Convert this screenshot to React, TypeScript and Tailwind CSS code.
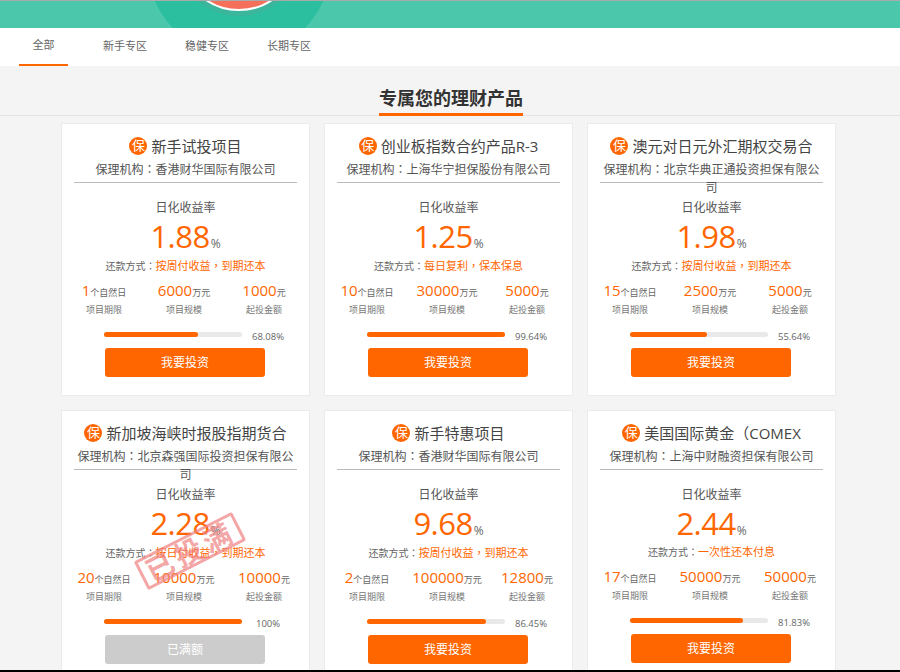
const font = { fontFamily: '"Open Sans", "Noto Sans CJK SC", sans-serif' };

type Product = {
  title: string;
  org: string;
  rate: string;
  repay: string;
  days: string;
  scale: string;
  min: string;
  progress: number;
  percent: string;
  full?: boolean;
};

const products: Product[] = [
  { title: "新手试投项目", org: "保理机构：香港财华国际有限公司", rate: "1.88", repay: "按周付收益，到期还本", days: "1", scale: "6000", min: "1000", progress: 68.08, percent: "68.08%" },
  { title: "创业板指数合约产品R-3", org: "保理机构：上海华宁担保股份有限公司", rate: "1.25", repay: "每日复利，保本保息", days: "10", scale: "30000", min: "5000", progress: 99.64, percent: "99.64%" },
  { title: "澳元对日元外汇期权交易合", org: "保理机构：北京华典正通投资担保有限公司", rate: "1.98", repay: "按周付收益，到期还本", days: "15", scale: "2500", min: "5000", progress: 55.64, percent: "55.64%" },
  { title: "新加坡海峡时报股指期货合", org: "保理机构：北京森强国际投资担保有限公司", rate: "2.28", repay: "按日付收益，到期还本", days: "20", scale: "10000", min: "10000", progress: 100, percent: "100%", full: true },
  { title: "新手特惠项目", org: "保理机构：香港财华国际有限公司", rate: "9.68", repay: "按周付收益，到期还本", days: "2", scale: "100000", min: "12800", progress: 86.45, percent: "86.45%" },
  { title: "美国国际黄金（COMEX", org: "保理机构：上海中财融资担保有限公司", rate: "2.44", repay: "一次性还本付息", days: "17", scale: "50000", min: "50000", progress: 81.83, percent: "81.83%" },
];

const tabs = ["全部", "新手专区", "稳健专区", "长期专区"];

// the reference centres full-width punctuation, which is the TC form of the glyph
function Cjk({ text }: { text: string }) {
  return (
    <>
      {text.split(/([：，（])/).map((part, i) =>
        i % 2 === 1 ? (
          <span key={i} className="font-['Noto_Sans_CJK_TC']">{part}</span>
        ) : (
          part
        ),
      )}
    </>
  );
}

function Stat({ value, unit, label }: { value: string; unit: string; label: string }) {
  return (
    <div className="text-center whitespace-nowrap">
      <div className="h-[20px] leading-[20px]">
        <span className="text-[15px] text-[#ff6600]">{value}</span>
        <span className="text-[9px] text-[#666]">{unit}</span>
      </div>
      <div className="mt-[3px] text-[9px] leading-[14px] text-[#777]">{label}</div>
    </div>
  );
}

function Card({ p }: { p: Product }) {
  return (
    <div className="relative h-[273px] w-[249px] shrink-0 border border-[#ebebeb] bg-white">
      <div className="mt-[11px] flex h-[22px] items-center justify-center gap-[4px] overflow-hidden whitespace-nowrap">
        <span className="flex h-[18px] w-[18px] shrink-0 items-center justify-center rounded-full bg-[#ff6600] text-[13px] text-white">保</span>
        <span className="text-[15px] text-[#444]"><Cjk text={p.title} /></span>
      </div>
      <div className="mx-[12px] mt-[3px] h-[23px] border-b border-[#bbb] text-center text-[12px] leading-[18px] text-[#555]">
        <Cjk text={p.org} />
      </div>
      <div className="mt-[15px] text-center text-[12px] leading-[20px] text-[#555]">日化收益率</div>
      <div className="mt-[-2px] h-[40px] text-center leading-[40px]">
        <span className="text-[31px] tracking-[-0.5px] text-[#ff6600]">{p.rate}</span>
        <span className="ml-[1px] text-[12px] text-[#666]">%</span>
      </div>
      <div className="mt-[1px] text-center text-[10px] leading-[16px] text-[#666]">
        还款方式<Cjk text="：" /><span className="text-[11px] text-[#ff6600]"><Cjk text={p.repay} /></span>
      </div>
      <div className="ml-[2px] mt-[6px] grid w-[240px] grid-cols-3">
        <Stat value={p.days} unit="个自然日" label="项目期限" />
        <Stat value={p.scale} unit="万元" label="项目规模" />
        <Stat value={p.min} unit="元" label="起投金额" />
      </div>
      <div className="ml-[42px] mt-[13px] flex items-start">
        <div className="mt-[2px] h-[5px] w-[138px] rounded-full bg-[#e9e9e9]">
          <div className="h-full rounded-full bg-[#ff6600]" style={{ width: `${p.progress}%` }} />
        </div>
        <div className={`text-center text-[9.5px] leading-[14px] text-[#666] ${p.full ? "ml-[14px]" : "ml-[10px]"}`}>{p.percent}</div>
      </div>
      <div className={`ml-[43px] mt-[4px] flex h-[29px] w-[160px] items-center justify-center rounded-[3px] text-[12px] text-white ${p.full ? "bg-[#cccccc]" : "bg-[#ff6600]"}`}>
        {p.full ? "已满额" : "我要投资"}
      </div>
      {p.full && (
        <div className="absolute left-[73px] top-[124px] flex h-[32px] w-[110px] rotate-[-27deg] items-center justify-center whitespace-nowrap rounded-[2px] border-[3px] border-[#f08080]/70 text-[28px] font-bold leading-none tracking-[4px] text-[#f08080]/70">
          已投满
        </div>
      )}
    </div>
  );
}

export default function App() {
  return (
    <div className="flex h-[672px] w-[900px] flex-col overflow-hidden bg-[#f4f4f4]" style={font}>
      <div className="h-[1px] shrink-0 bg-[#aaa]" />
      <div className="relative h-[27px] shrink-0 overflow-hidden bg-[#4bc7ab]">
        <div className="absolute left-[146.5px] top-[-129px] h-[184px] w-[184px] rounded-full bg-[#2bbfa0]" />
        <div className="absolute left-[173.5px] top-[-115px] h-[130px] w-[130px] rounded-full bg-[#3bb59b]" />
        <div className="absolute left-[178.5px] top-[-110px] h-[120px] w-[120px] rounded-full border-2 border-white bg-[#f4705a]" />
      </div>
      <div className="flex h-[38px] shrink-0 bg-white pl-[19px]">
        {tabs.map((t, i) => (
          <div
            key={t}
            className={`flex h-full items-center justify-center pb-[2px] text-[11px] text-[#666] ${i === 0 ? "mr-[16px] w-[49px] border-b-2 border-[#ff6600]" : "w-[82px]"}`}
          >
            {t}
          </div>
        ))}
      </div>
      <div className="relative h-[50px] shrink-0 border-b border-[#e2e2e2] text-center">
        <div className="relative z-10 ml-[379px] mt-[19px] w-[144px] whitespace-nowrap border-b-[3px] border-[#ff6600] pb-[2px] text-[18px] font-bold leading-[26px] text-[#333]">
          专属您的理财产品
        </div>
      </div>
      <div className="ml-[61px] mt-[7px] flex min-h-0 w-[780px] flex-1 flex-wrap content-start gap-x-[14px] gap-y-[14px] overflow-hidden">
        {products.map((p) => (
          <Card key={p.title} p={p} />
        ))}
      </div>
      <div className="h-[2px] shrink-0 bg-black" />
    </div>
  );
}
